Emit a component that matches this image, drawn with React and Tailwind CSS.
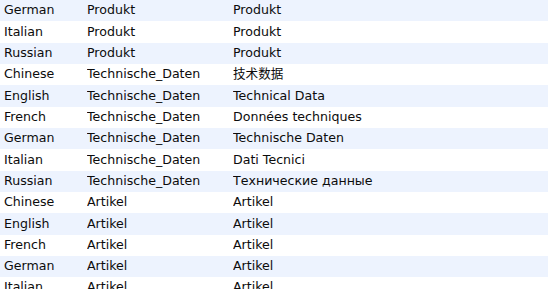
const rows = [
  ['German', 'Produkt', 'Produkt'],
  ['Italian', 'Produkt', 'Produkt'],
  ['Russian', 'Produkt', 'Produkt'],
  ['Chinese', 'Technische_Daten', '技术数据'],
  ['English', 'Technische_Daten', 'Technical Data'],
  ['French', 'Technische_Daten', 'Données techniques'],
  ['German', 'Technische_Daten', 'Technische Daten'],
  ['Italian', 'Technische_Daten', 'Dati Tecnici'],
  ['Russian', 'Technische_Daten', 'Технические данные'],
  ['Chinese', 'Artikel', 'Artikel'],
  ['English', 'Artikel', 'Artikel'],
  ['French', 'Artikel', 'Artikel'],
  ['German', 'Artikel', 'Artikel'],
  ['Italian', 'Artikel', 'Artikel'],
];

export default function App() {
  return (
    <div
      className="w-[548px] h-[289px] overflow-hidden bg-white text-[12.6px] text-[#0c0c0c]"
      style={{ fontFamily: '"DejaVu Sans", "Noto Sans CJK SC", sans-serif' }}
    >
      {rows.map((r, i) => (
        <div
          key={i}
          className={`flex items-center h-[21.33px] pr-[2px] ${i % 2 === 0 ? 'bg-[#edf3fe]' : 'bg-white'}`}
        >
          <div className="w-[87px] pl-[4px] truncate">{r[0]}</div>
          <div className="w-[146px] truncate">{r[1]}</div>
          <div className="flex-1 truncate">{r[2]}</div>
        </div>
      ))}
    </div>
  );
}
